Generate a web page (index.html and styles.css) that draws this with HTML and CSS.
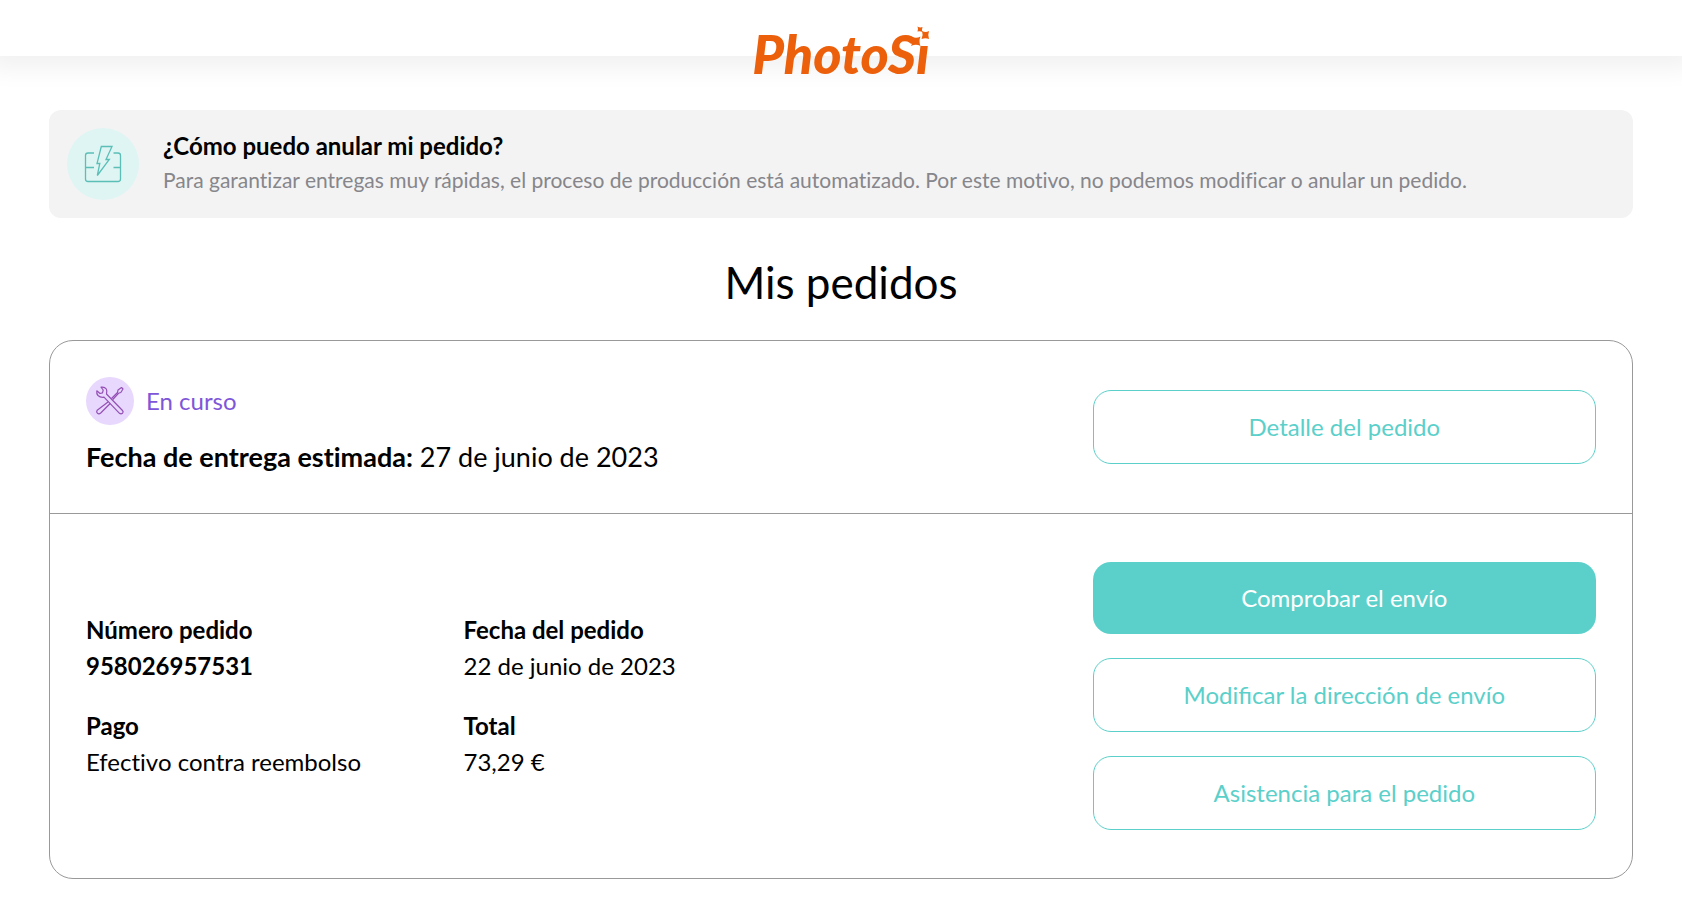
FILE: index.html
```html
<!DOCTYPE html>
<html lang="es">
<head>
    <meta charset="UTF-8">
    <meta name="viewport" content="width=device-width, initial-scale=1.0">
    <title>Mis pedidos - PhotoSi</title>
    <link rel="stylesheet" href="styles.css">
</head>
<body>
    <header class="header">
        <!-- The stars stand in for the dot of the "i" -->
        <a class="logo" href="#">PhotoSi<svg class="logo-stars" width="22" height="22" viewBox="0 0 22 22">
                <rect x="5" y="0" width="17" height="18"/>
                <path d="M1 10.500Q6 13 10.500 10.500Q8.500 15 10.500 20Q6 17.500 1 20Q3.500 15 1 10.500Z"/>
                <path d="M12 5Q15.500 7 19 5Q17.500 9 19 13Q15.500 11.500 11.500 13Q13.500 9 12 5Z"/>
                <path d="M7.500 0.500Q10 2 12.500 1Q11.500 3.500 12.500 6Q10 4.800 7.500 5.500Q8.500 3 7.500 0.500Z"/>
            </svg></a>
    </header>

    <main class="page">
        <!-- Cancel order notice -->
        <section class="notice">
            <svg class="notice-icon" width="72" height="72" viewBox="0 0 72 72">
                <circle cx="36" cy="36" r="36"/>
                <path d="M27 25H21Q18.500 25 18.500 27.500V51Q18.500 53.500 21 53.500H51Q53.500 53.500 53.500 51V27.500Q53.500 25 51 25H46.500M18.500 39.500H27M46.500 39.500H53.500"/>
                <path d="M34.300 18.500H45L39 31.500H42.300L30.300 47.500L32.800 35.500H30Z"/>
            </svg>
            <div>
                <h2 class="notice-title">¿Cómo puedo anular mi pedido?</h2>
                <p class="notice-text">Para garantizar entregas muy rápidas, el proceso de producción está automatizado. Por este motivo, no podemos modificar o anular un pedido.</p>
            </div>
        </section>

        <h1 class="title">Mis pedidos</h1>

        <article class="order">
            <!-- Order status -->
            <div class="order-row order-status">
                <div class="order-info">
                    <div class="status">
                        <svg class="status-icon" width="48" height="48" viewBox="0 0 48 48">
                            <circle cx="24" cy="24" r="24"/>
                            <path d="M25.500 21.500L31.500 15.500L32 13L35.500 10.500L37 12L34.800 15.500L32.500 16.300L26.800 22.500M22 25L11.200 33.200Q10 35 11.500 36.300Q13 37.500 14.700 36L24.200 26.500"/>
                            <path d="M15 10.200Q18.500 9.500 20.300 12Q21.300 14 20.500 17L36.500 33.500Q37.800 35 36.500 36.300Q35 37.500 33.500 36.300L18 20.200Q14.500 20.800 12 18.500Q10.300 16.500 10.800 13.800L14 16.500L16.500 15.800L17.200 13Z"/>
                        </svg>
                        <span>En curso</span>
                    </div>
                    <p class="delivery"><strong>Fecha de entrega estimada:</strong> 27 de junio de 2023</p>
                </div>
                <div class="order-actions">
                    <button class="btn" type="button">Detalle del pedido</button>
                </div>
            </div>

            <!-- Order data -->
            <div class="order-row order-data">
                <dl class="order-info details">
                    <div>
                        <dt>Número pedido</dt>
                        <dd class="order-number">958026957531</dd>
                    </div>
                    <div>
                        <dt>Fecha del pedido</dt>
                        <dd>22 de junio de 2023</dd>
                    </div>
                    <div>
                        <dt>Pago</dt>
                        <dd>Efectivo contra reembolso</dd>
                    </div>
                    <div>
                        <dt>Total</dt>
                        <dd>73,29 €</dd>
                    </div>
                </dl>
                <div class="order-actions">
                    <button class="btn btn-primary" type="button">Comprobar el envío</button>
                    <button class="btn" type="button">Modificar la dirección de envío</button>
                    <button class="btn" type="button">Asistencia para el pedido</button>
                </div>
            </div>
        </article>
    </main>
</body>
</html>
```
FILE: styles.css
```css
* {
    box-sizing: border-box;
}
body {
    margin: 0;
    background: #fff;
    color: #000;
    font-family: Lato, sans-serif;
    font-size: 24px;
    line-height: 36px;
    overflow-x: hidden;
}
h1, h2, p, dl, dd {
    margin: 0;
}
.header {
    display: flex;
    justify-content: center;
    height: 56px;
    padding-top: 26px;
    box-shadow: 0 0 24px 12px rgba(0, 0, 0, 0.06);
}
.logo {
    position: relative;
    height: 56px;
    color: #ec5f0b;
    font-size: 54px;
    font-style: italic;
    font-weight: 900;
    line-height: 56px;
    text-decoration: none;
}
.logo-stars {
    position: absolute;
    top: 0;
    right: -2px;
    fill: #ec5f0b;
}
.logo-stars rect {
    fill: #fff;
}
.page {
    padding: 54px 49px 42px;
}
.notice {
    display: flex;
    gap: 24px;
    padding: 18px;
    border-radius: 12px;
    background: #f3f3f3;
}
.notice-icon {
    flex: none;
    fill: none;
    stroke: #5bbfb8;
    stroke-width: 1.3;
}
.notice-icon circle {
    fill: #dff5f3;
    stroke: none;
}
.notice-title {
    font-size: 24px;
    font-weight: 700;
}
.notice-text {
    color: #86868b;
    font-size: 21px;
    line-height: 32px;
}
.notice-text, .delivery, .details {
    font-variant-ligatures: no-common-ligatures;
}
.title {
    margin: 30px 0 24px;
    font-size: 44px;
    font-weight: 400;
    line-height: 68px;
    text-align: center;
}
.order {
    border: 1px solid #999;
    border-radius: 24px;
}
.order-row {
    display: flex;
    align-items: center;
    padding: 36px;
}
.order-data {
    padding: 48px 36px;
    border-top: 1px solid #999;
}
.order-info {
    flex: 2;
}
.order-actions {
    display: flex;
    flex: 1;
    flex-direction: column;
    gap: 24px;
}
.status {
    display: flex;
    align-items: center;
    gap: 12px;
    margin-bottom: 12px;
    color: #7e57d8;
}
.status-icon {
    fill: none;
    stroke: #9450b5;
    stroke-width: 1.2;
    stroke-linejoin: round;
}
.status-icon circle {
    fill: #e8d8fd;
    stroke: none;
}
.delivery {
    font-size: 27px;
    line-height: 40px;
}
.details {
    display: grid;
    grid-template-columns: 3fr 5fr;
    row-gap: 24px;
}
.details dt, .order-number {
    font-weight: 700;
}
.btn {
    padding: 18px;
    border: 1px solid #5bd0ca;
    border-radius: 18px;
    background: #fff;
    color: #5bd0ca;
    font: inherit;
    cursor: pointer;
}
.btn-primary {
    border: 0;
    background: #5bd0ca;
    color: #fff;
}
```
